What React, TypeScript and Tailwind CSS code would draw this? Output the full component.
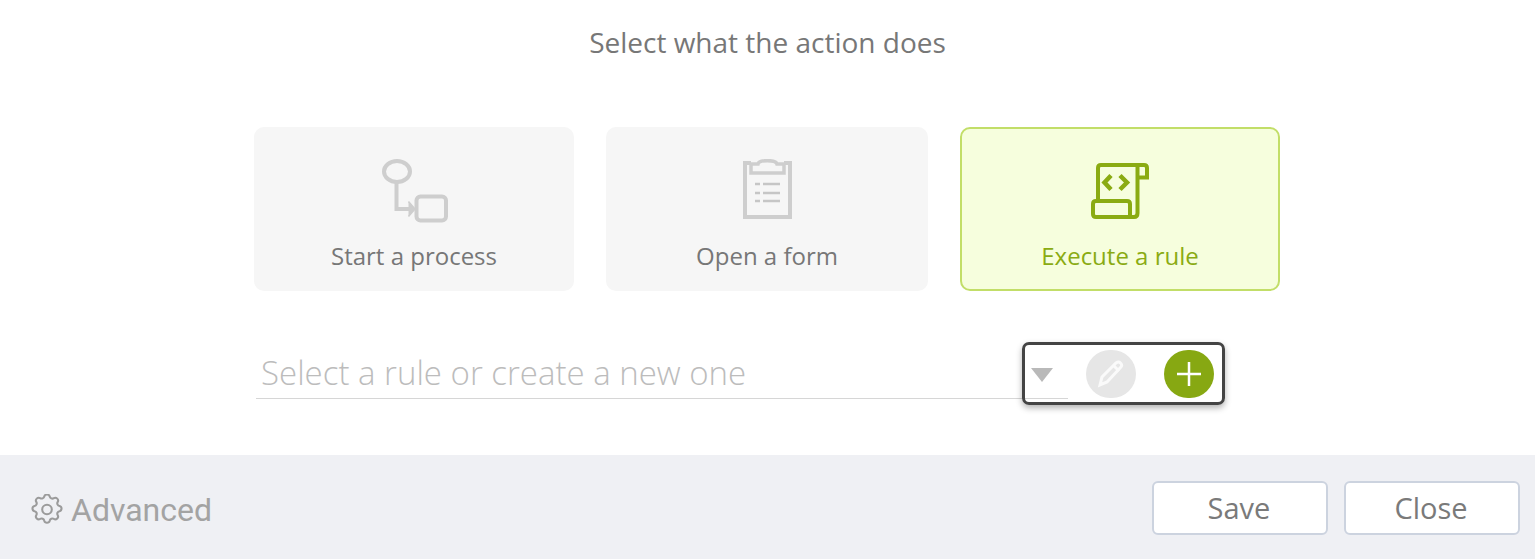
import React from "react";

const Card = ({ label, active, children, className }: { label: string; active?: boolean; children: React.ReactNode; className: string }) => (
  <div
    className={`h-[164px] rounded-[10px] flex flex-col items-center ${className} ${
      active ? "bg-[#f6fedd] border-2 border-[#c2de68] text-[#8aab12]" : "bg-[#f6f6f6] text-[#777777]"
    }`}
  >
    <div className={`w-full flex justify-center ${active ? "pt-[34px] h-[111px]" : "pt-[32px] h-[113px]"}`}>{children}</div>
    <div className="text-[24px] leading-[30px] mt-[1px]">{label}</div>
  </div>
);

export default function App() {
  return (
    <div className="w-[1535px] h-[559px] bg-white flex flex-col overflow-hidden font-['Open_Sans',sans-serif]">
      <div className="flex-1 flex flex-col">
        <div className="pt-[23px] text-center text-[28px] leading-[38px] text-[#777777]">Select what the action does</div>
        <div className="mt-[66px] pl-[254px] flex gap-[32px]">
          <Card label="Start a process" className="w-[320px]">
            <svg width="66" height="64" viewBox="0 0 66 64" fill="none" stroke="#cecece" strokeWidth="4" className="ml-[1px]">
              <ellipse cx="15" cy="12.500" rx="13" ry="10.500" />
              <path d="M14.500 23V50H31" />
              <path d="M26.500 42.500l6.500 7.500-6.500 7.500" fill="#cecece" strokeWidth="1.500" />
              <rect x="34.500" y="37.500" width="29.500" height="24" rx="4" />
            </svg>
          </Card>
          <Card label="Open a form" className="w-[322px]">
            <svg width="49" height="60" viewBox="0 0 49 60" fill="none" stroke="#cecece" strokeWidth="4">
              <path d="M8 4H2V58H47V4H41" />
              <path d="M8 14V5H15C16 0.500 33 0.500 34 5H41V14Z" strokeWidth="3.500" />
              <g strokeWidth="2.500" stroke="#c6c6c6">
                <path d="M12 25h5M20 25h17" />
                <path d="M12 34h5M20 34h17" />
                <path d="M12 42h5M20 42h17" />
              </g>
            </svg>
          </Card>
          <Card label="Execute a rule" active className="w-[320px]">
            <svg width="58" height="56" viewBox="0 0 58 56" fill="none" stroke="#8aab12" strokeWidth="4">
              <path d="M7 37V5C7 3 8 2 10 2H53C55 2 56 3 56 5V14.500H47" />
              <path d="M46.500 2V50C46.500 53 45 54 43 54H5C3 54 2 53 2 51V41C2 39 3 38 5 38H36C38 38 39 39 39 41V54" />
              <path d="M20 12.500L13.500 19.500L20 26.500M29 12.500L36 19.500L29 26.500" strokeWidth="4.500" />
            </svg>
          </Card>
        </div>
        <div className="relative mt-[52px] ml-[256px] w-[812px] h-[56px] border-b border-[#d6d6d6] flex items-center">
          <span className="pl-[5px] text-[33px] font-light text-[#bcbcbc] leading-[40px] pt-[5px]">Select a rule or create a new one</span>
          <div className="absolute left-[766px] top-[-1px] w-[203px] h-[63px] border-[3px] border-[#444444] rounded-[7px] shadow-[0_3px_6px_rgba(0,0,0,0.3)] flex items-center">
            <svg width="22" height="14" viewBox="0 0 22 14" className="ml-[6px] mt-[2px]">
              <path d="M0 0H22L11 14Z" fill="#b9b9b9" />
            </svg>
            <div className="ml-[33px] w-[50px] h-[48px] rounded-full bg-[#e6e6e6] flex items-center justify-center">
              <svg width="30" height="30" viewBox="0 0 30 30" fill="none" stroke="#fafafa" strokeWidth="3">
                <path d="M4 26l2-8L20 4c2-1.500 3-1.500 4.500 0s1.500 3 0 4.500L11 23z" />
                <path d="M18 7l5 5" />
              </svg>
            </div>
            <div className="ml-[28px] w-[50px] h-[48px] rounded-full bg-[#87a812] flex items-center justify-center">
              <svg width="26" height="26" viewBox="0 0 26 26" stroke="#ffffff" strokeWidth="2.500">
                <path d="M13 1V25M1 13H25" />
              </svg>
            </div>
          </div>
        </div>
      </div>
      <div className="h-[104px] bg-[#eff0f4] flex items-center pl-[31px] pr-[15px]">
        <svg width="32" height="31" viewBox="2 2 20 20" preserveAspectRatio="none" fill="none" stroke="#9b9b9b" strokeWidth="1.300" strokeLinecap="round" strokeLinejoin="round" className="mt-[5px]">
          <path d="M10.3 3.6c.4-1.700 3-1.700 3.400 0a1.700 1.700 0 0 0 2.600 1.100c1.500-.9 3.300.9 2.400 2.400a1.700 1.700 0 0 0 1.100 2.600c1.700.4 1.700 3 0 3.400a1.700 1.700 0 0 0-1.100 2.600c.9 1.500-.9 3.300-2.400 2.400a1.700 1.700 0 0 0-2.600 1.100c-.4 1.700-3 1.700-3.400 0a1.700 1.700 0 0 0-2.600-1.100c-1.500.9-3.300-.9-2.400-2.400a1.700 1.700 0 0 0-1.100-2.600c-1.700-.4-1.700-3 0-3.400a1.700 1.700 0 0 0 1.100-2.600c-.9-1.500.9-3.300 2.400-2.400 1 .6 2.300.1 2.600-1.100z" />
          <circle cx="12" cy="12" r="3" />
        </svg>
        <span className="ml-[8px] text-[32px] leading-[40px] text-[#a3a3a3] font-['Roboto',sans-serif] mt-[5px]">Advanced</span>
        <div className="ml-auto flex gap-[16px] mt-[2px]">
          <button className="w-[176px] h-[54px] bg-white border-2 border-[#ccd3df] rounded-[6px] text-[29px] text-[#7a7a7a] pb-[1px] pr-[2px]">Save</button>
          <button className="w-[176px] h-[54px] bg-white border-2 border-[#ccd3df] rounded-[6px] text-[29px] text-[#7a7a7a] pb-[1px] pr-[2px]">Close</button>
        </div>
      </div>
    </div>
  );
}
